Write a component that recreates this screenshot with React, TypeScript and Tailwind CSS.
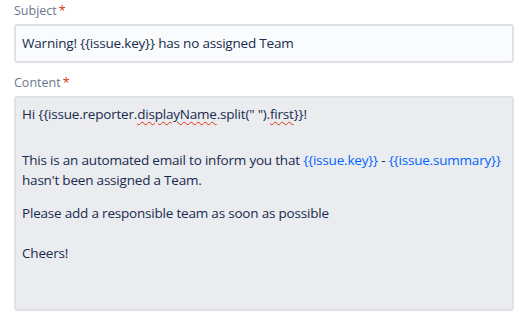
import React from "react";

const squiggle =
  "underline decoration-wavy decoration-[#de350b] decoration-1 underline-offset-2";

function Label({ children }: { children: React.ReactNode }) {
  return (
    <div className="text-[12.5px] leading-4 text-[#6b778c]">
      {children}
      <span className="ml-0.5 text-[#de350b]">*</span>
    </div>
  );
}

export default function App() {
  return (
    <div
      className="h-[319px] w-[520px] bg-white px-[14px] pt-[3px] text-[13.5px] text-[#172b4d]"
      style={{ fontFamily: '"Open Sans", "Noto Sans", sans-serif' }}
    >
      <Label>Subject</Label>
      <div className="mt-[5px] flex h-[39px] w-[500px] items-center whitespace-nowrap rounded-[3px] border-2 border-[#dfe1e6] bg-[#fafbfc] px-[6px] tracking-[-0.2px]">
        Warning! {"{{issue.key}}"} has no assigned Team
      </div>

      <div className="mt-[12px]">
        <Label>Content</Label>
      </div>
      <div className="mt-[5px] h-[215px] w-[500px] whitespace-nowrap rounded-[3px] border-2 border-[#dfe1e6] bg-[#ebecf0] px-[6px] pt-[6px] leading-5 tracking-[-0.2px]">
        <p>
          Hi {"{{issue.reporter."}
          <span className={squiggle}>displayName</span>
          {'.split(" ").'}
          <span className={squiggle}>first</span>
          {"}}!"}
        </p>
        <p className="mt-[26px]">
          This is an automated email to inform you that{" "}
          <span className="text-[#0065ff]">{"{{issue.key}}"}</span> -{" "}
          <span className="text-[#0065ff]">{"{{issue.summary}}"}</span>
          <br />
          hasn't been assigned a Team.
        </p>
        <p className="mt-[13px]">Please add a responsible team as soon as possible</p>
        <p className="mt-[20px]">Cheers!</p>
      </div>
    </div>
  );
}
